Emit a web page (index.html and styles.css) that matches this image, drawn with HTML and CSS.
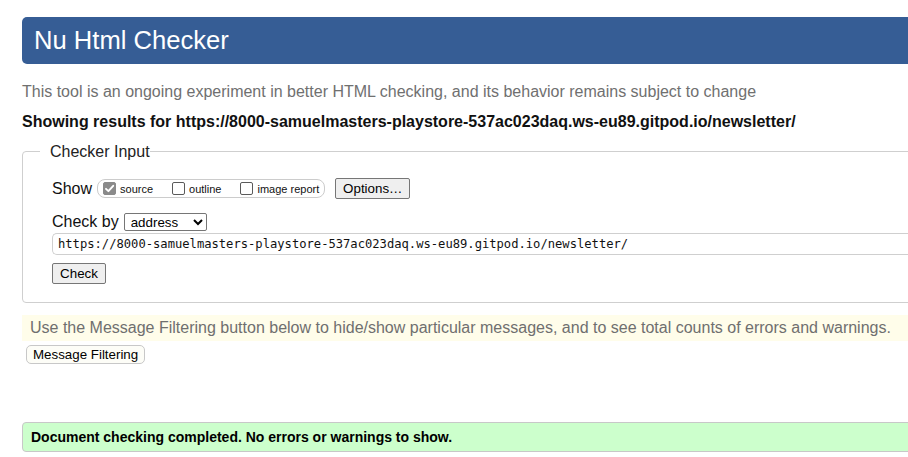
FILE: index.html
```html
<!DOCTYPE html>
<html lang="en">
<head>
<meta charset="utf-8">
<title>Nu Html Checker</title>
<link rel="stylesheet" href="styles.css">
</head>
<body>
<div class="page">
  <h1 class="title">Nu Html Checker</h1>
  <p class="intro">This tool is an ongoing experiment in better HTML checking, and its behavior remains subject to change</p>
  <p class="results">Showing results for https://8000-samuelmasters-playstore-537ac023daq.ws-eu89.gitpod.io/newsletter/</p>
  <fieldset class="checker">
    <legend class="legend">Checker Input</legend>
    <div class="row show-row">
      <span class="row-label">Show</span>
      <span class="opts">
        <label class="opt"><span class="cb cb-on"><svg viewBox="0 0 13 13" width="13" height="13"><path d="M3 6.8 L5.4 9.2 L10.2 3.8" fill="none" stroke="#fff" stroke-width="1.9" stroke-linecap="round" stroke-linejoin="round"/></svg></span>source</label>
        <label class="opt"><span class="cb"></span>outline</label>
        <label class="opt last"><span class="cb"></span>image report</label>
      </span>
      <button class="btn options">Options…</button>
    </div>
    <div class="row by-row">
      <span class="row-label">Check by</span>
      <select class="sel"><option>address</option></select>
    </div>
    <input class="url" type="text" value="https://8000-samuelmasters-playstore-537ac023daq.ws-eu89.gitpod.io/newsletter/">
    <div class="row">
      <button class="btn check">Check</button>
    </div>
  </fieldset>
  <p class="notice">Use the Message Filtering button below to hide/show particular messages, and to see total counts of errors and warnings.</p>
  <div class="row">
    <button class="filter">Message Filtering</button>
  </div>
  <p class="success">Document checking completed. No errors or warnings to show.</p>
</div>
</body>
</html>
```

FILE: styles.css
```css
html, body {
  margin: 0;
  padding: 0;
  overflow: hidden;
  background: #fff;
}

body {
  font-family: "Liberation Sans", Arial, sans-serif;
  color: #000;
}

.page {
  display: flex;
  flex-direction: column;
  align-items: stretch;
  padding-left: 22px;
  margin-right: -60px;
}

.title {
  margin: 17px 0 0 0;
  height: 47px;
  line-height: 47px;
  padding-left: 12px;
  background: #365d95;
  color: #fff;
  font-size: 25.6px;
  font-weight: normal;
  border-radius: 5px 0 0 5px;
}

.intro {
  margin: 18px 0 0 0;
  font-size: 16px;
  line-height: 19px;
  color: #707070;
}

.results {
  margin: 11px 0 0 0;
  font-size: 16px;
  line-height: 19px;
  font-weight: bold;
  color: #111;
}

.checker {
  margin: 11px 0 0 0;
  padding: 17px 0 18px 29px;
  border: 1px solid #cfcfcf;
  border-radius: 4px;
  min-width: 0;
}

.legend {
  margin-left: -12px;
  padding: 0 0 0 10px;
  font-size: 16px;
  line-height: 19px;
  color: #222;
}

.row {
  display: flex;
  align-items: center;
}

.row-label {
  font-size: 16px;
  line-height: 19px;
  color: #111;
}

.show-row {
  height: 21px;
}

.opts {
  display: flex;
  align-items: center;
  margin-left: 5px;
  height: 17px;
  padding: 0 5px 0 5px;
  border: 1px solid #ccc;
  border-radius: 8px;
}

.opt {
  display: flex;
  align-items: center;
  font-size: 11px;
  color: #111;
  padding-right: 19px;
}

.opt.last {
  padding-right: 0;
}

.cb {
  display: inline-block;
  box-sizing: border-box;
  width: 13px;
  height: 13px;
  margin-right: 4px;
  border: 1px solid #5a5a5a;
  border-radius: 2px;
  background: #fff;
}

.cb svg {
  display: block;
  margin: -1px;
}

.cb-on {
  background: #8a8a8a;
  border-color: #8a8a8a;
}

.btn {
  font-family: "Liberation Sans", Arial, sans-serif;
  font-size: 13.333px;
  background: #efefef;
  border: 1px solid #767676;
  border-radius: 2px;
  color: #000;
  padding: 0 6px;
  height: 21px;
}

.options {
  margin-left: 10px;
  width: 75px;
}

.by-row {
  margin-top: 13px;
  height: 19px;
}

.sel {
  margin-left: 5px;
  width: 83px;
  height: 18px;
  font-family: "Liberation Sans", Arial, sans-serif;
  font-size: 13.333px;
  border: 1px solid #767676;
  border-radius: 2px;
  background: #fff;
  color: #000;
  padding: 0 2px;
}

.url {
  display: block;
  width: 100%;
  margin: 2px 0 0 0;
  box-sizing: border-box;
  height: 22px;
  padding: 0 5px;
  border: 1px solid #cfcfcf;
  border-right: none;
  border-radius: 5px 0 0 5px;
  font-family: "DejaVu Sans Mono", "Liberation Mono", monospace;
  font-size: 12.15px;
  color: #111;
  outline: none;
}

.check {
  margin-top: 8px;
  width: 54px;
}

.notice {
  margin: 12px 0 0 0;
  padding: 0 8px;
  height: 26px;
  line-height: 26px;
  font-size: 16px;
  color: #6f6f6f;
  background: #fffdea;
}

.filter {
  margin: 4px 0 0 4px;
  height: 19px;
  padding: 0 6px;
  font-family: "Liberation Sans", Arial, sans-serif;
  font-size: 13.333px;
  color: #000;
  background: #fdfdf7;
  border: 1px solid #c8c8c8;
  border-radius: 5px;
}

.success {
  margin: 58px 0 0 0;
  height: 28px;
  line-height: 28px;
  padding: 0 8px;
  font-size: 14px;
  font-weight: bold;
  color: #000;
  background: #ccffcc;
  border: 1px solid #c8c8c8;
  border-radius: 4px 0 0 4px;
}
```
